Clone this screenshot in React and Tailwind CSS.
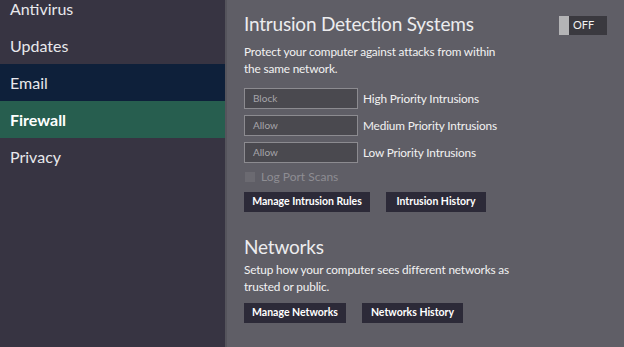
import React, { useState } from "react";

const navItems = ["Antivirus", "Updates", "Email", "Firewall", "Privacy"];

const rules = [
  { value: "Block", label: "High Priority Intrusions" },
  { value: "Allow", label: "Medium Priority Intrusions" },
  { value: "Allow", label: "Low Priority Intrusions" },
];

const App = () => {
  const [active] = useState("Firewall");

  const navClass = (item) => {
    if (item === active) return "bg-[#275e4f] font-bold text-white";
    if (item === "Email") return "bg-[#0e203a] text-[#e8e8ec]";
    return "text-[#e8e8ec]";
  };

  return (
    <div className="flex h-[347px] w-[624px] overflow-hidden font-['Lato',sans-serif]">
      {/* Sidebar */}
      <div className="w-[227px] shrink-0 bg-[#373442] border-r-2 border-[#55545c]">
        <div className="-mt-[10px]">
          {navItems.map((item) => (
            <div key={item} className={`flex h-[37px] items-center pl-[10px] text-[16px] ${navClass(item)}`}>
              {item}
            </div>
          ))}
        </div>
      </div>

      {/* Content */}
      <div className="flex-1 bg-[#5f5e66] pl-[17px] pr-[17px] text-[#f2f2f2]">
        <div className="mt-[12px] flex items-center justify-between">
          <h1 className="text-[19px] leading-[24px] tracking-[-0.2px] text-[#ececee]">Intrusion Detection Systems</h1>
          <div className="mt-[3px] flex h-[19px] w-[48px] items-stretch">
            <div className="w-[10px] bg-[#b4b4b6]" />
            <div className="flex flex-1 items-center bg-[#3a393f] pl-[4px] text-[11px] text-[#f2f2f2]">OFF</div>
          </div>
        </div>
        <p className="mt-[7px] w-[270px] text-[11.8px] leading-[17px] tracking-[-0.15px]">
          Protect your computer against attacks from within the same network.
        </p>

        <div className="mt-[11px] flex flex-col gap-[6px]">
          {rules.map((r) => (
            <div key={r.label} className="flex items-center gap-[5px]">
              <div className="flex h-[21px] w-[114px] items-center border border-[#8c8b90] bg-[#4a494f] pl-[8px] text-[10px] text-[#a6a5aa]">
                {r.value}
              </div>
              <span className="text-[11.8px] tracking-[-0.15px] text-[#f2f2f2]">{r.label}</span>
            </div>
          ))}
        </div>

        <label className="mt-[5px] flex items-center gap-[6px] text-[12px] text-[#8e8d93]">
          <span className="ml-[1px] h-[10px] w-[10px] bg-[#6b6a71]" />
          Log Port Scans
        </label>

        <div className="mt-[6px] flex gap-[16px]">
          <button className="h-[20px] w-[126px] bg-[#2c2a38] text-[10.5px] font-bold text-white">Manage Intrusion Rules</button>
          <button className="h-[20px] w-[100px] bg-[#2c2a38] text-[10.5px] font-bold text-white">Intrusion History</button>
        </div>

        <h2 className="mt-[23px] text-[19px] leading-[24px] tracking-[-0.2px] text-[#ececee]">Networks</h2>
        <p className="mt-[2px] w-[300px] text-[11.8px] leading-[17px] tracking-[-0.15px]">
          Setup how your computer sees different networks as trusted or public.
        </p>
        <div className="mt-[8px] flex gap-[16px]">
          <button className="h-[20px] w-[102px] bg-[#2c2a38] text-[10.5px] font-bold text-white">Manage Networks</button>
          <button className="h-[20px] w-[101px] bg-[#2c2a38] text-[10.5px] font-bold text-white">Networks History</button>
        </div>
      </div>
    </div>
  );
};

export default App;
